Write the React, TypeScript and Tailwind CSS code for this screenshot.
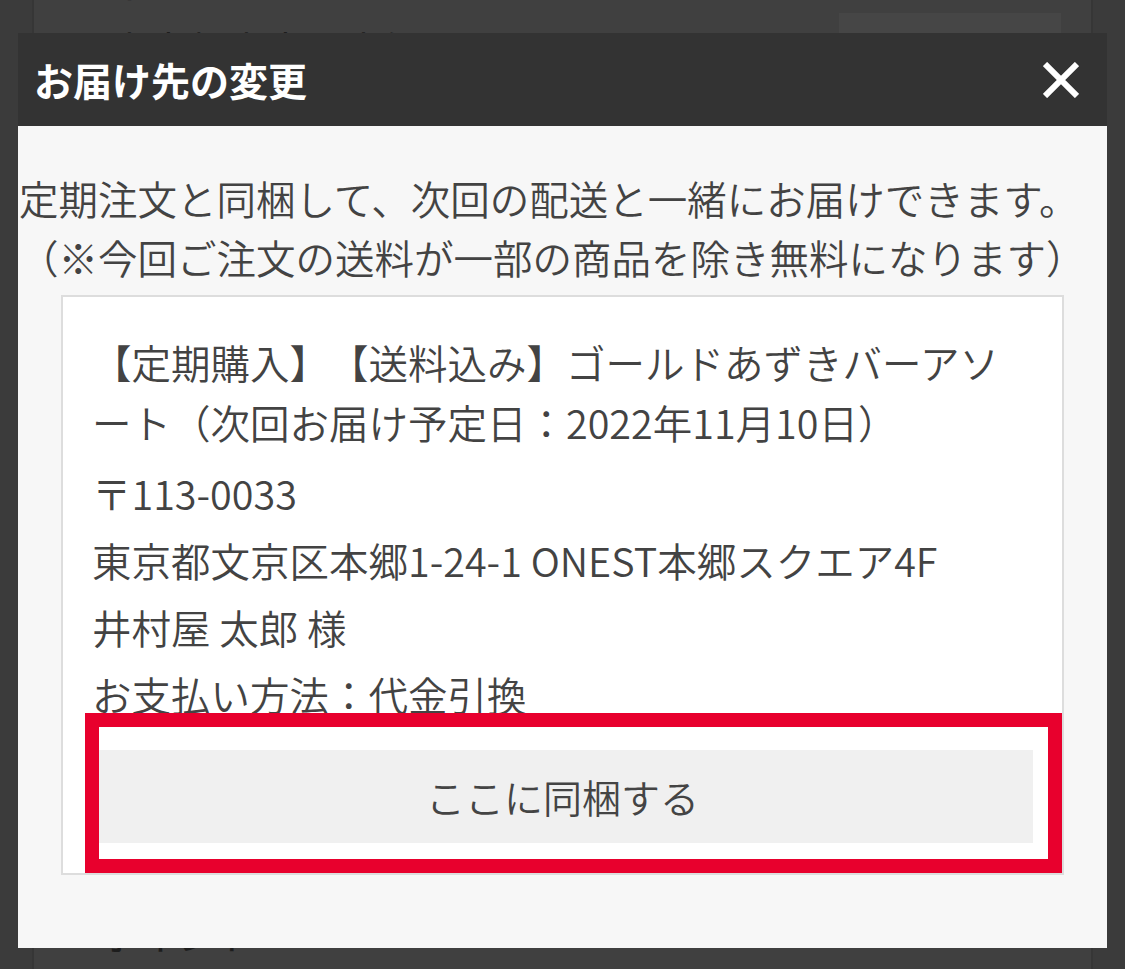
import React from 'react';

const addressLines = [
  '〒113-0033',
  '東京都文京区本郷1-24-1 ONEST本郷スクエア4F',
  '井村屋 太郎 様',
  'お支払い方法：代金引換',
];

function CloseIcon() {
  return (
    <svg width="36" height="36" viewBox="0 0 36 36" fill="none" aria-hidden="true">
      <path d="M2 2 L34 34 M34 2 L2 34" stroke="#ffffff" strokeWidth="6" />
    </svg>
  );
}

export default function App() {
  return (
    <div
      lang="ja"
      className="relative h-[969px] w-[1125px] overflow-hidden bg-[#3b3b3b] font-['Noto_Sans_CJK_JP','Noto_Sans',sans-serif] [text-spacing-trim:space-all]"
    >
      {/* dimmed page behind the modal */}
      <div className="mx-[32px] flex h-full flex-col border-x-2 border-[#363636] bg-[#404040] text-[39px] leading-[60px] text-[#1d1d1d]">
        <div className="-mt-[47px] pl-[76px]">〒113-0033</div>
        <div className="flex items-start justify-between pr-[30px]">
          <div className="pl-[76px] pt-[5px]">東京都文京区本郷1-24-1</div>
          <div className="h-[100px] w-[222px] bg-[#464646]" />
        </div>
        <div className="mt-auto pb-[6px] pl-[66px]">ポイント</div>
      </div>

      {/* modal */}
      <div className="absolute left-[18px] top-[33px] w-[1089px] bg-[#f7f7f7] font-[350] text-[#434343]">
        <div className="flex h-[93px] items-center justify-between bg-[#333333] pl-[16px] pr-[28px]">
          <h2 className="text-[39px] font-bold leading-none text-white">お届け先の変更</h2>
          <button type="button" className="flex h-[36px] w-[36px] items-center justify-center">
            <CloseIcon />
          </button>
        </div>

        <div className="pt-[42px] pb-[73px]">
          <p className="whitespace-nowrap pl-[1px] text-[39.5px] leading-[59px]">
            定期注文と同梱して、次回の配送と一緒にお届けできます。
            <br />
            （※今回ご注文の送料が一部の商品を除き無料になります）
          </p>

          <div className="relative mx-[43px] mt-[9px] border-2 border-[#dddddd] bg-white px-[29px] pt-[35px] pb-[30px]">
            <p className="mb-[7px] text-[39.5px] leading-[60px] [line-break:loose]">
              【定期購入】【送料込み】ゴールドあずきバーアソート（次回お届け予定日：2022年11月10日）
            </p>
            {addressLines.map((line) => (
              <p key={line} className="text-[39.5px] leading-[67px]">
                {line}
              </p>
            ))}
            <button
              type="button"
              className="mt-[23px] flex h-[93px] w-full items-center justify-center bg-[#f0f0f0] text-[39px] text-[#444444]"
            >
              ここに同梱する
            </button>

            {/* red highlight frame */}
            <div className="pointer-events-none absolute left-[22px] top-[416px] h-[160px] w-[977px] border-[14px] border-[#e8002d]" />
          </div>
        </div>
      </div>
    </div>
  );
}
